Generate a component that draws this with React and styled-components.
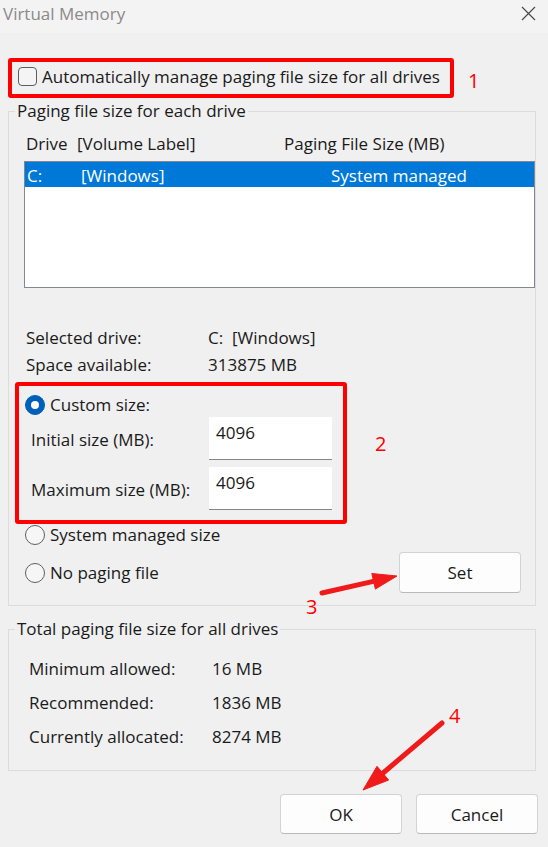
import { Fragment } from "react";
import styled, { createGlobalStyle } from "styled-components";

const GlobalStyle = createGlobalStyle`
  html, body {
    margin: 0;
    padding: 0;
    background: #f0f0f0;
  }
  body {
    font-family: "Open Sans", "Noto Sans", sans-serif;
    color: #1a1a1a;
  }
  * {
    box-sizing: border-box;
  }
`;

const Window = styled.div`
  position: relative;
  width: 548px;
  height: 847px;
  overflow: hidden;
  background: #f0f0f0;
  font-size: 17px;
`;

const TitleBar = styled.div`
  height: 33px;
  padding: 0 12px 6px 3px;
  display: flex;
  align-items: center;
  justify-content: space-between;
  background: #f3f3f3;
  color: #8a8a8a;
  font-size: 17px;
  line-height: 20px;
`;

const Content = styled.div`
  padding: 0 12px 0 8px;
`;

const MarkRow = styled.div`
  display: flex;
  align-items: ${(p) => p.$align || "center"};
  margin-top: ${(p) => p.$top || 0}px;
  margin-left: ${(p) => p.$left || 0}px;
`;

const RedBox = styled.div`
  flex: none;
  width: ${(p) => p.$w}px;
  height: ${(p) => p.$h}px;
  border: 4px solid #ff0000;
  border-radius: 3px;
`;

const CheckFrame = styled(RedBox)`
  display: flex;
  align-items: center;
  gap: 5px;
  padding: 0 6px 4px 6px;
  white-space: nowrap;
`;

const CustomFrame = styled(RedBox)`
  display: flex;
  flex-direction: column;
  padding-top: 9px;
`;

const Num = styled.span`
  color: #f00;
  font-size: 20px;
  line-height: 24px;
  margin-top: ${(p) => p.$top || 0}px;
  margin-left: ${(p) => p.$left || 0}px;
`;

const NumOverlay = styled(Num)`
  position: absolute;
  margin: 0;
  left: ${(p) => p.$x}px;
  top: ${(p) => p.$y}px;
`;

const CheckBox = styled.span`
  flex: none;
  width: 19px;
  height: 19px;
  border: 1px solid #5c5c5c;
  border-radius: 4px;
  background: #f4f4f4;
`;

const Radio = styled.span`
  flex: none;
  width: 20px;
  height: 20px;
  border-radius: 50%;
  display: flex;
  align-items: center;
  justify-content: center;
  background: ${(p) => (p.$checked ? "#005fb8" : "#f6f6f6")};
  border: 1px solid ${(p) => (p.$checked ? "#005fb8" : "#5f5f5f")};
  &::after {
    content: "";
    display: ${(p) => (p.$checked ? "block" : "none")};
    width: 8px;
    height: 8px;
    border-radius: 50%;
    background: #fff;
  }
`;

const RadioRow = styled.div`
  display: flex;
  align-items: center;
  gap: 5px;
  height: 20px;
  line-height: 20px;
  margin-top: ${(p) => p.$top || 0}px;
  padding-left: ${(p) => p.$pad}px;
`;

const Group = styled.fieldset`
  margin: ${(p) => p.$top}px 0 0 0;
  padding: 0 0 ${(p) => p.$bottom}px 0;
  border: 1px solid #dcdcdc;
  min-width: 0;
`;

const Legend = styled.legend`
  margin-left: 6px;
  padding: 0 2px;
  font-size: 17px;
  line-height: 20px;
`;

const HeaderGrid = styled.div`
  display: grid;
  grid-template-columns: 51px 207px auto;
  margin-top: 13px;
  padding-left: 17px;
  line-height: 20px;
`;

const ListBox = styled.div`
  margin: 7px 0 0 15px;
  height: 127px;
  border: 1px solid #828790;
  background: #fff;
`;

const SelectedRow = styled.div`
  display: grid;
  grid-template-columns: 54px 250px auto;
  height: 25px;
  padding: 3px 0 0 2px;
  line-height: 22px;
  background: #0078d7;
  color: #fff;
`;

const InfoGrid = styled.div`
  display: grid;
  grid-template-columns: ${(p) => p.$col}px auto;
  margin-top: ${(p) => p.$top}px;
  padding-left: ${(p) => p.$pad}px;
  line-height: ${(p) => p.$line}px;
`;

const SizeRow = styled.div`
  display: flex;
  align-items: center;
  height: 43px;
  margin-top: ${(p) => p.$top}px;
`;

const SizeLabel = styled.span`
  width: 190px;
  padding: 2px 0 0 12px;
  line-height: 20px;
`;

const SizeInput = styled.div`
  width: 123px;
  height: 43px;
  padding: 6px 0 0 7px;
  line-height: 20px;
  background: #fff;
  border-bottom: 1px solid #868686;
`;

const SetRow = styled.div`
  display: flex;
  align-items: center;
  justify-content: space-between;
  height: 41px;
  margin-top: 7px;
  padding: 0 14px 0 16px;
`;

const Button = styled.button`
  width: 122px;
  height: ${(p) => p.$h || 40}px;
  padding: 0;
  background: #fdfdfd;
  border: 1px solid #d3d3d3;
  border-bottom-color: #b9b9b9;
  border-radius: 4px;
  font-family: inherit;
  font-size: 17px;
  color: #1a1a1a;
`;

const Footer = styled.div`
  display: flex;
  justify-content: flex-end;
  gap: 14px;
  margin: 23px -2px 0 0;
`;

const Overlay = styled.svg`
  position: absolute;
  left: 0;
  top: 0;
  pointer-events: none;
`;

function CloseIcon() {
  return (
    <svg width="15" height="15" viewBox="0 0 15 15">
      <path d="M1 1 L14 14 M14 1 L1 14" stroke="#4a4a4a" strokeWidth="1.2" fill="none" />
    </svg>
  );
}

function Arrow({ x1, y1, x2, y2, head = 24, half = 8 }) {
  const dx = x2 - x1;
  const dy = y2 - y1;
  const len = Math.hypot(dx, dy);
  const ux = dx / len;
  const uy = dy / len;
  const bx = x2 - ux * head;
  const by = y2 - uy * head;
  const px = -uy * half;
  const py = ux * half;
  return (
    <g fill="#f01a1a" stroke="#f01a1a">
      <line x1={x1} y1={y1} x2={bx + ux * 2} y2={by + uy * 2} strokeWidth="5" strokeLinecap="round" />
      <polygon
        points={`${x2},${y2} ${bx + px},${by + py} ${bx - px},${by - py}`}
        strokeWidth="1"
        strokeLinejoin="round"
      />
    </g>
  );
}

const totals = [
  ["Minimum allowed:", "16 MB"],
  ["Recommended:", "1836 MB"],
  ["Currently allocated:", "8274 MB"],
];

export default function App() {
  return (
    <Window>
      <GlobalStyle />
      <TitleBar>
        <span>Virtual Memory</span>
        <CloseIcon />
      </TitleBar>
      <Content>
        <MarkRow $top={25}>
          <CheckFrame $w={446} $h={40}>
            <CheckBox />
            <span>Automatically manage paging file size for all drives</span>
          </CheckFrame>
          <Num $left={14} $top={5}>1</Num>
        </MarkRow>

        <Group $top={3} $bottom={12}>
          <Legend>Paging file size for each drive</Legend>
          <HeaderGrid>
            <span>Drive</span>
            <span>[Volume Label]</span>
            <span>Paging File Size (MB)</span>
          </HeaderGrid>
          <ListBox>
            <SelectedRow>
              <span>C:</span>
              <span>[Windows]</span>
              <span>System managed</span>
            </SelectedRow>
          </ListBox>
          <InfoGrid $col={182} $top={36} $pad={17} $line={27}>
            <span>Selected drive:</span>
            <span>C:&nbsp; [Windows]</span>
            <span>Space available:</span>
            <span>313875 MB</span>
          </InfoGrid>
          <MarkRow $top={4} $left={6} $align="flex-start">
            <CustomFrame $w={332} $h={142}>
              <RadioRow $pad={6}>
                <Radio $checked />
                <span>Custom size:</span>
              </RadioRow>
              <SizeRow $top={2}>
                <SizeLabel>Initial size (MB):</SizeLabel>
                <SizeInput>4096</SizeInput>
              </SizeRow>
              <SizeRow $top={7}>
                <SizeLabel>Maximum size (MB):</SizeLabel>
                <SizeInput>4096</SizeInput>
              </SizeRow>
            </CustomFrame>
            <Num $left={28} $top={50}>2</Num>
          </MarkRow>
          <RadioRow $pad={16} $top={1}>
            <Radio />
            <span>System managed size</span>
          </RadioRow>
          <SetRow>
            <RadioRow $pad={0}>
              <Radio />
              <span>No paging file</span>
            </RadioRow>
            <Button $h={41}>Set</Button>
          </SetRow>
        </Group>

        <Group $top={13} $bottom={16}>
          <Legend>Total paging file size for all drives</Legend>
          <InfoGrid $col={183} $top={13} $pad={20} $line={34}>
            {totals.map(([label, value]) => (
              <Fragment key={label}>
                <span>{label}</span>
                <span>{value}</span>
              </Fragment>
            ))}
          </InfoGrid>
        </Group>

        <Footer>
          <Button>OK</Button>
          <Button>Cancel</Button>
        </Footer>
      </Content>

      <Overlay width="548" height="847" viewBox="0 0 548 847">
        <Arrow x1={322} y1={593} x2={397} y2={576} />
        <Arrow x1={442} y1={723} x2={363} y2={790} head={26} half={9} />
      </Overlay>
      <NumOverlay $x={306} $y={595}>3</NumOverlay>
      <NumOverlay $x={449} $y={704}>4</NumOverlay>
    </Window>
  );
}
